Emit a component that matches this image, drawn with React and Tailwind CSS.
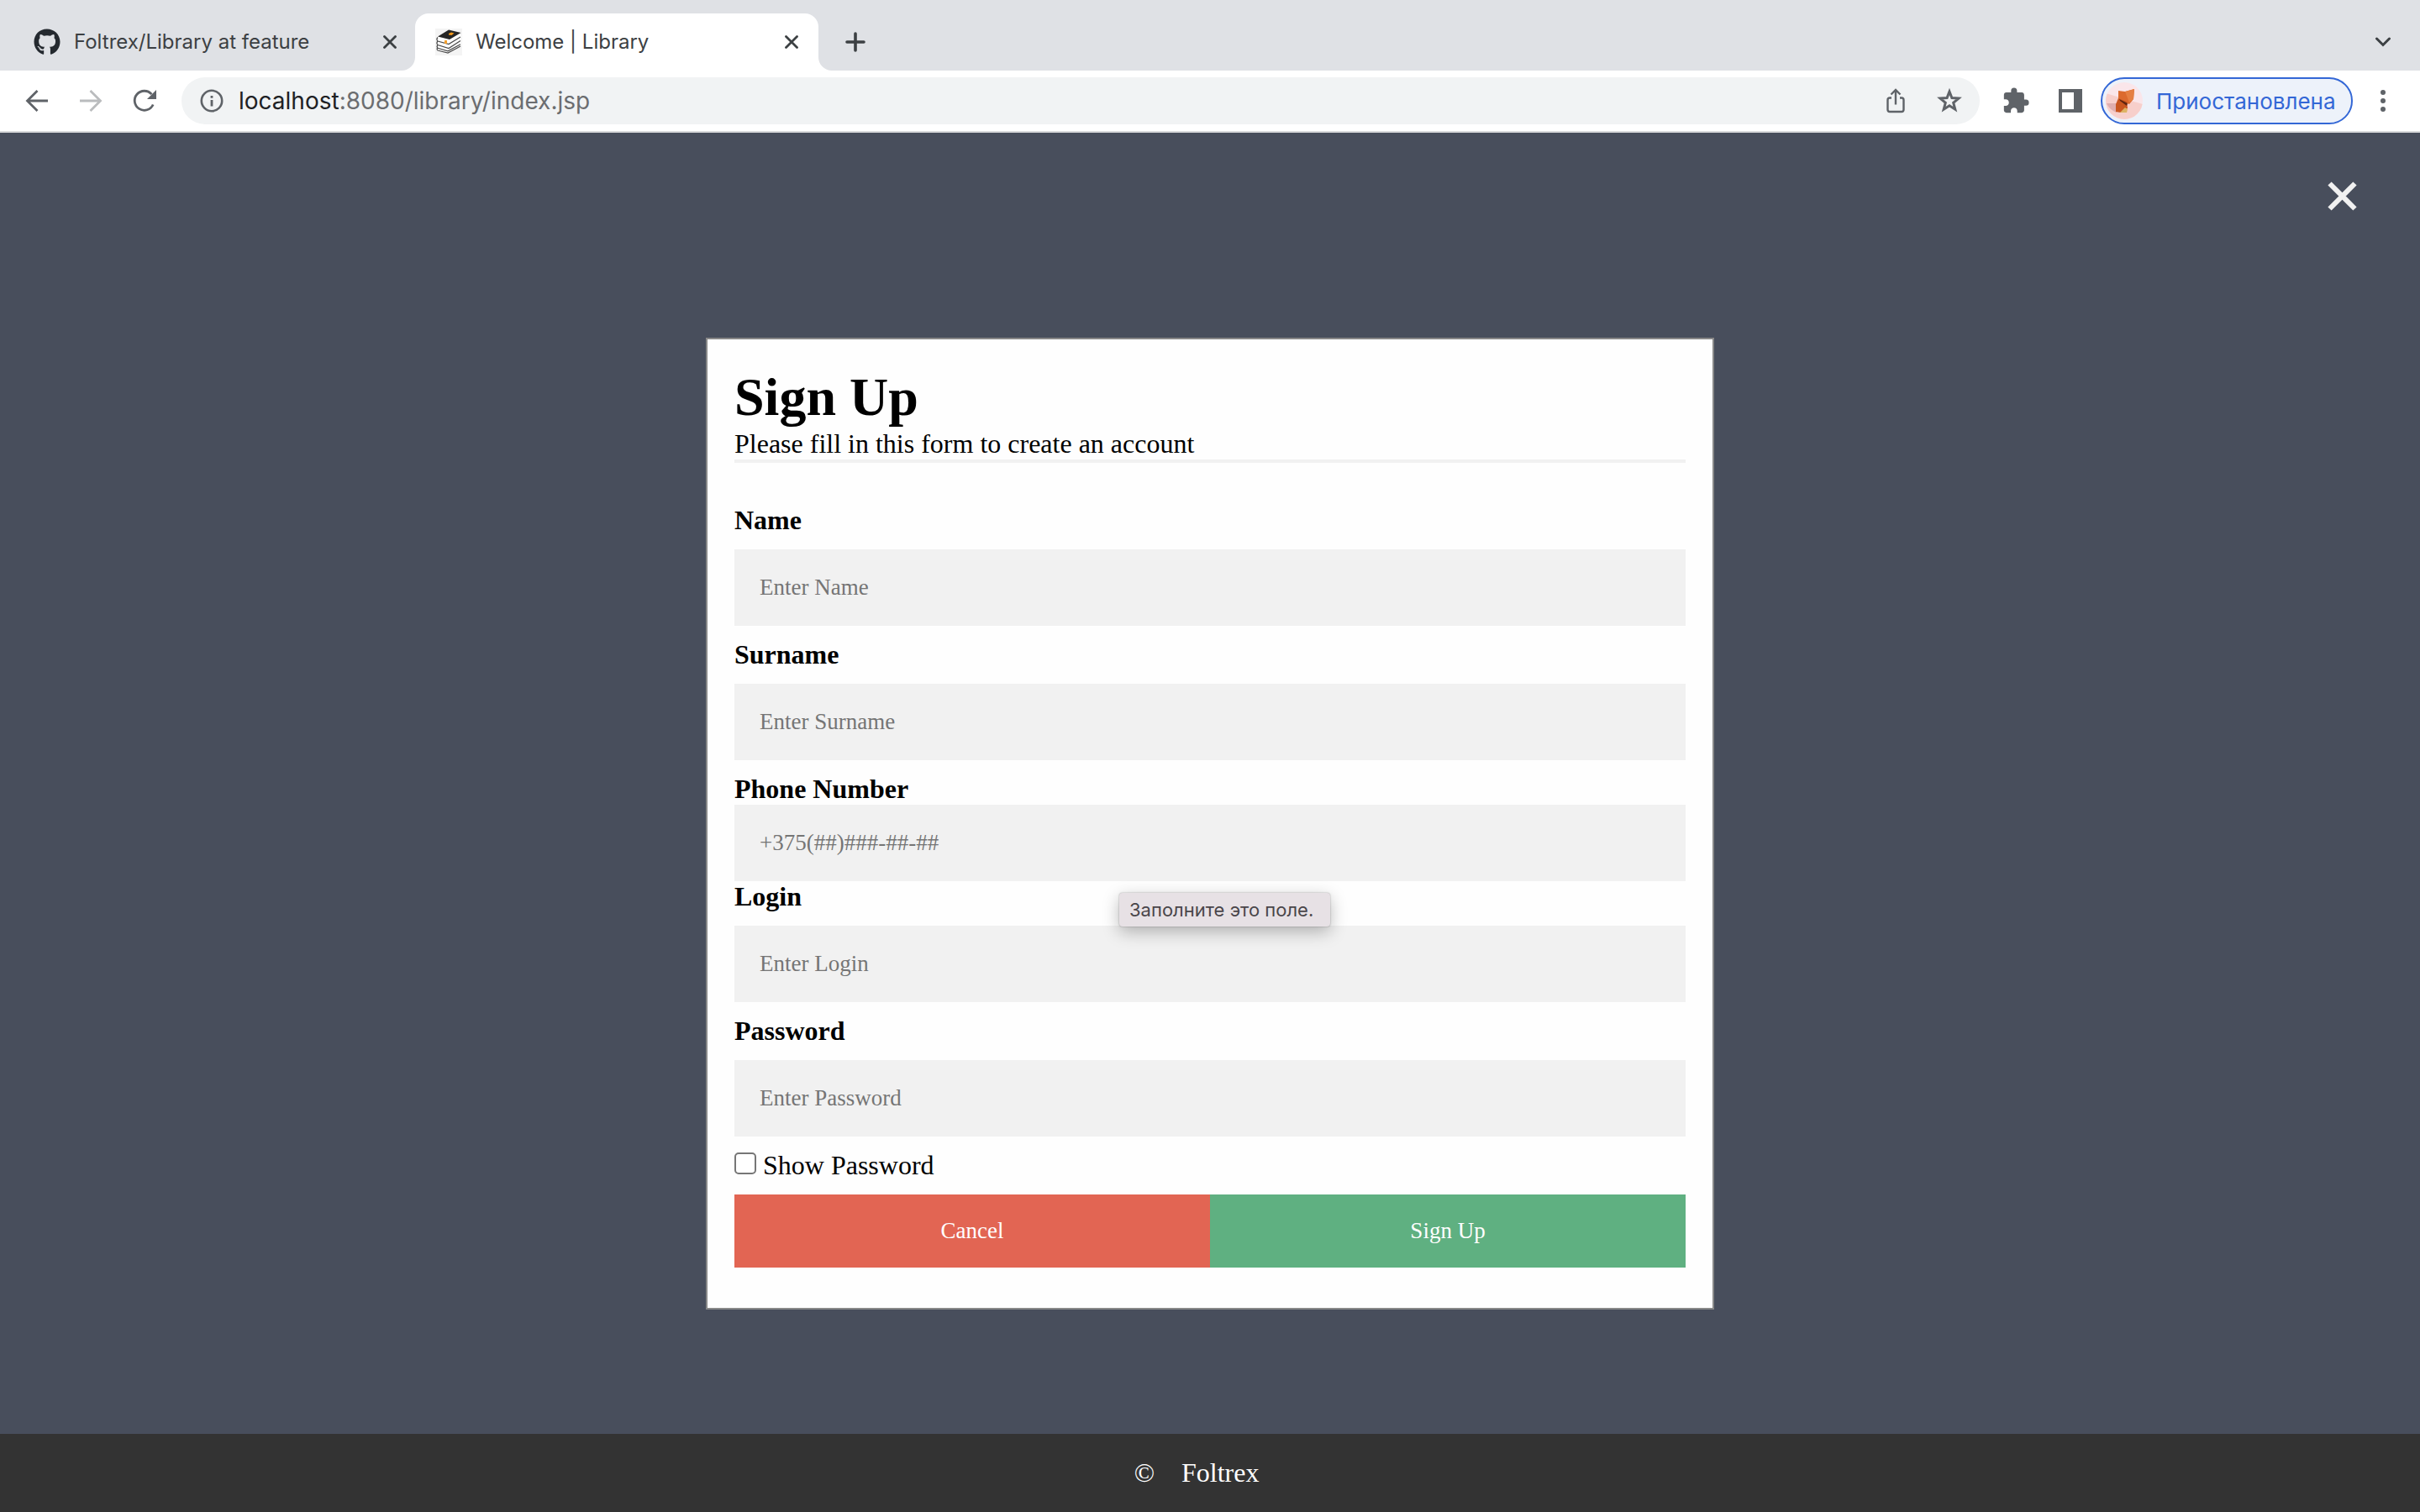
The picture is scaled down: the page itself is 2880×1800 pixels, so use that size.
import React, { useState } from "react";
import { FaGithub } from "react-icons/fa";
import { MdExtension } from "react-icons/md";

function CloseIcon({ className }) {
  return (
    <svg viewBox="0 0 16 16" className={className} fill="none" stroke="currentColor" strokeWidth="2.8" strokeLinecap="round">
      <path d="M1.5 1.5 14.5 14.5M14.5 1.5 1.5 14.5" />
    </svg>
  );
}

function BooksIcon() {
  return (
    <svg viewBox="0 0 32 32" className="size-8 shrink-0">
      <rect width="32" height="32" fill="#f4f4f4" />
      <path d="M2 10v17l13 3.5L31 20V7L17 2z" fill="#fff" />
      <g fill="none" stroke="#4a4a4a" strokeWidth="1.2">
        <path d="M3 10.5c-1.4 1.5-1 3.5 0 4.5l13 3.5L30 10" />
        <path d="M3 15c-1.4 1.5-1 3.5 0 4.5l13 4L30 14.5" />
        <path d="M3 19.5c-1.4 1.5-1 2.8 0 3.800l12 3.5 15-8" />
        <path d="M3 22.5c-1.4 1.5-1 2.800 0 3.500l12 3L30 21" />
      </g>
      <path d="M3 9.5 16 1.5 30.500 5 17 13z" fill="#262626" />
      <path d="m16 6 3-1.500 3.500 1-3 2.500-3.500-.5z" fill="#f39a1d" />
      <path d="M11 14h3v4.500l-1.500-.8-1.500.5z" fill="#f5a12d" />
    </svg>
  );
}

function ArrowIcon({ flip }) {
  return (
    <svg viewBox="0 0 32 32" className={flip ? "size-8 rotate-180" : "size-8"} fill="none" stroke="currentColor" strokeWidth="2.8">
      <path d="M29 16H5M16.5 4 4.5 16l12 12" />
    </svg>
  );
}

function ReloadIcon() {
  return (
    <svg viewBox="0 0 32 32" className="size-8">
      <path d="M26.2 20.5A11.500 11.500 0 1 1 24.400 8.200" fill="none" stroke="currentColor" strokeWidth="2.8" />
      <path d="M30 3v11H19z" fill="currentColor" />
    </svg>
  );
}

function InfoIcon() {
  return (
    <svg viewBox="0 0 28 28" className="size-7 shrink-0" fill="none" stroke="#5f6368">
      <circle cx="14" cy="14" r="12.2" strokeWidth="2.6" />
      <path d="M14 13v7.5M14 8v2.8" strokeWidth="2.8" />
    </svg>
  );
}

function ShareIcon() {
  return (
    <svg viewBox="0 0 32 32" className="size-8" fill="none" stroke="currentColor" strokeWidth="2.400">
      <path d="M11 12.500H9A2.500 2.500 0 0 0 6.500 15v11.500A2.500 2.500 0 0 0 9 29h14a2.500 2.500 0 0 0 2.500-2.500V15a2.500 2.500 0 0 0-2.500-2.500h-2" />
      <path d="M16 20.500V3.500M10.500 8.500 16 3l5.500 5.500" />
    </svg>
  );
}

function StarIcon() {
  return (
    <svg viewBox="0 0 36 36" className="size-9" fill="none" stroke="currentColor" strokeWidth="3">
      <path d="m18 7 2.900 7.600 8.100.5-6.300 5.200 2.100 7.900-6.800-4.400-6.800 4.400 2.100-7.900L7 15.100l8.100-.5z" />
    </svg>
  );
}

function Avatar() {
  return (
    <svg viewBox="0 0 44 44" className="size-11 shrink-0">
      <clipPath id="avatar-clip">
        <circle cx="22" cy="22" r="22" />
      </clipPath>
      <g clipPath="url(#avatar-clip)">
        <rect width="44" height="44" fill="#fae6ea" />
        <path d="M0 13 44 26v18H0z" fill="#f7cfcb" />
        <path d="M1 25h12v11C8 34 3 30 1 25z" fill="#dfaeae" />
        <path d="m15 10 8 1 11-3-1 12-5 6-13-5z" fill="#dc6a2e" />
        <path d="m23 11 11-3-1 12-5 4z" fill="#e57f42" />
        <path d="m15 19-3 7v9l6 1 8-5-1-8z" fill="#c9561f" />
        <path d="m16 20 10 5-1 3-8-6z" fill="#5f2410" />
        <path d="m17 36 6-6 3 2-1 4z" fill="#ddb465" />
      </g>
    </svg>
  );
}

function TabFlare({ className }) {
  return (
    <svg viewBox="0 0 16 16" className={className} fill="#fff">
      <path d="M16 0v16H0A16 16 0 0 0 16 0z" />
    </svg>
  );
}

function TabStrip() {
  return (
    <div className="flex items-end bg-[#dfe1e5] text-2xl text-[#3c4043]">
      <div className="flex h-17 w-[494px] items-center pr-[22px] pl-10">
        <FaGithub className="size-8 shrink-0 text-[#24292f]" />
        <span className="ml-4 grow whitespace-nowrap">Foltrex/Library at feature</span>
        <button aria-label="Close tab">
          <CloseIcon className="size-4" />
        </button>
      </div>
      <div className="relative mt-4 flex h-17 w-[480px] items-center rounded-t-2xl bg-white px-6">
        <TabFlare className="absolute bottom-0 -left-4 size-4" />
        <TabFlare className="absolute -right-4 bottom-0 size-4 -scale-x-100" />
        <BooksIcon />
        <span className="ml-4 grow whitespace-nowrap">Welcome | Library</span>
        <button aria-label="Close tab">
          <CloseIcon className="size-4" />
        </button>
      </div>
      <button aria-label="New tab" className="ml-8 flex h-17 items-center">
        <svg viewBox="0 0 24 24" className="size-6" fill="none" stroke="currentColor" strokeWidth="3.6" strokeLinecap="round">
          <path d="M12 2v20M2 12h20" />
        </svg>
      </button>
      <button aria-label="Search tabs" className="mr-[34px] ml-auto flex h-17 items-center">
        <svg viewBox="0 0 20 12" className="h-3 w-5" fill="none" stroke="currentColor" strokeWidth="3" strokeLinecap="round">
          <path d="m2.500 2 7.500 7.500L17.500 2" />
        </svg>
      </button>
    </div>
  );
}

function Toolbar() {
  return (
    <div className="flex h-[74px] items-center border-b-2 border-[#d9dadc] bg-white pr-10 pl-7 text-[#5f6368]">
      <div className="flex gap-8">
        <button aria-label="Back"><ArrowIcon /></button>
        <button aria-label="Forward" className="text-[#babcbe]"><ArrowIcon flip /></button>
        <button aria-label="Reload"><ReloadIcon /></button>
      </div>
      <div className="ml-7 flex h-14 grow items-center rounded-full bg-[#f1f3f4] pr-[18px] pl-[22px]">
        <InfoIcon />
        <span className="ml-[18px] grow text-[28px] text-[#6b6d70]">
          <span className="text-[#202124]">localhost</span>:8080/library/index.jsp
        </span>
        <button aria-label="Share"><ShareIcon /></button>
        <button aria-label="Bookmark" className="ml-[30px]"><StarIcon /></button>
      </div>
      <button aria-label="Extensions" className="ml-[26px]"><MdExtension className="size-[34px]" /></button>
      <button aria-label="Side panel" className="ml-[34px]">
        <svg viewBox="0 0 28 28" className="size-7">
          <path fillRule="evenodd" d="M0 0h28v28H0zM4 4v20h14V4z" fill="currentColor" />
        </svg>
      </button>
      <button className="ml-[22px] flex h-14 w-[300px] items-center gap-4 rounded-full border-2 border-[#3367d6] bg-[#edf2fa] pl-1 text-[26px] text-[#3367d6]">
        <Avatar />
        Приостановлена
      </button>
      <button aria-label="Menu" className="ml-8">
        <svg viewBox="0 0 8 28" className="h-7 w-2" fill="currentColor">
          <circle cx="4" cy="4" r="3" />
          <circle cx="4" cy="14" r="3" />
          <circle cx="4" cy="24" r="3" />
        </svg>
      </button>
    </div>
  );
}

const inputClass =
  "block h-[91px] w-full bg-[#f1f1f1] px-[30px] text-[27px] text-black outline-none placeholder:text-[#757575]";

function Field({ id, label, placeholder, type = "text", tight = false, children }) {
  return (
    <div className={tight ? "relative mt-4" : "relative"}>
      <label htmlFor={id} className="block font-bold">{label}</label>
      <input id={id} type={type} placeholder={placeholder} className={tight ? inputClass : inputClass + " mt-4"} />
      {children}
    </div>
  );
}

function SignUpForm() {
  const [shown, setShown] = useState(false);
  return (
    <form
      className="mx-auto w-5/12 border-2 border-[#888] bg-[#fefefe] px-8 pt-8 pb-12 text-[32px] leading-[37px] text-black"
      onSubmit={(e) => e.preventDefault()}
    >
      <h1 className="text-[64px] leading-[74px] font-bold">Sign Up</h1>
      <p>Please fill in this form to create an account</p>
      <hr className="mb-[50px] border-t-4 border-[#f1f1f1]" />
      <Field id="name" label="Name" placeholder="Enter Name" />
      <div className="mt-4">
        <Field id="surname" label="Surname" placeholder="Enter Surname" />
      </div>
      <Field id="phone" label="Phone Number" placeholder="+375(##)###-##-##" tight>
        <div
          role="tooltip"
          className="absolute top-[142px] left-[458px] z-10 rounded-sm bg-[#e7e1e5] pr-5 pl-3 font-[Inter,sans-serif] text-[22px] leading-10 whitespace-nowrap text-[#4a464a] shadow-[0_6px_20px_rgba(0,0,0,0.28),0_0_2px_rgba(0,0,0,0.35)]"
        >
          Заполните это поле.
        </div>
      </Field>
      <Field id="login" label="Login" placeholder="Enter Login" />
      <div className="mt-4">
        <Field id="password" label="Password" placeholder="Enter Password" type={shown ? "text" : "password"} />
      </div>
      <label className="mt-4 flex gap-2">
        <input
          type="checkbox"
          checked={shown}
          onChange={(e) => setShown(e.target.checked)}
          className="mt-[3px] size-[26px] appearance-none rounded-[5px] border-2 border-[#767676] bg-white checked:bg-[#3367d6]"
        />
        Show Password
      </label>
      <div className="mt-4 grid grid-cols-2 text-[27px] leading-[31px] text-white">
        <button type="button" className="bg-[#e26553] py-7">Cancel</button>
        <button type="submit" className="bg-[#5fb081] py-7">Sign Up</button>
      </div>
    </form>
  );
}

export default function App() {
  return (
    <div className="flex min-h-screen flex-col bg-[#484e5c] font-['Liberation_Serif',serif]">
      <header className="font-[Inter,sans-serif]">
        <TabStrip />
        <Toolbar />
      </header>
      <main className="relative grow pt-[244px] pb-[148px]">
        <button aria-label="Close" className="absolute top-[58px] right-[75px]">
          <svg viewBox="0 0 35 35" className="size-[35px]" fill="none" stroke="#f1f1f1" strokeWidth="6">
            <path d="M2.500 2.500 32.500 32.500M32.500 2.500 2.500 32.500" />
          </svg>
        </button>
        <SignUpForm />
      </main>
      <footer className="flex justify-center gap-8 bg-[#333] py-7 pr-8 text-[32px] leading-[37px] text-white">
        <span>©</span>
        <span>Foltrex</span>
      </footer>
    </div>
  );
}
